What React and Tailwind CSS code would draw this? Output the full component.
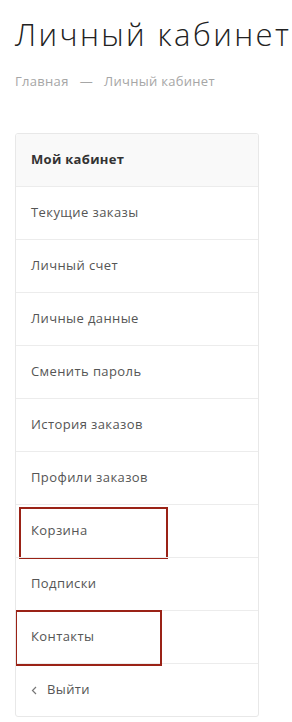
import React from 'react';

const items = [
  'Текущие заказы',
  'Личный счет',
  'Личные данные',
  'Сменить пароль',
  'История заказов',
  'Профили заказов',
  'Корзина',
  'Подписки',
  'Контакты',
];

export default function App() {
  return (
    <div className="min-h-screen bg-white px-[15px] pt-[16px] text-[#333]" style={{ fontFamily: '"Open Sans", "Liberation Sans", sans-serif' }}>
      <h1 className="whitespace-nowrap text-[31px] font-light leading-[36px] tracking-[2.4px] text-[#222]">Личный кабинет</h1>
      <div className="mt-[20px] flex items-center text-[13px] leading-[18px] tracking-[0.3px] text-[#a6a6a6]">
        <span>Главная</span>
        <span className="mx-[11px]">—</span>
        <span>Личный кабинет</span>
      </div>

      <div className="mt-[43px] w-[244px] overflow-hidden rounded-[3px] border border-[#e8e8e8]">
        <div className="flex h-[52px] items-center bg-[#f9f9f9] px-[15px] text-[13px] font-bold tracking-[0.3px] text-[#333]">Мой кабинет</div>
        {items.map((item) => (
          <div key={item} className="relative flex h-[53px] items-center border-t border-[#ececec] px-[15px] text-[13px] tracking-[0.4px] text-[#555]">
            {item}
            {item === 'Корзина' && (
              <span className="pointer-events-none absolute left-[3px] top-[2px] h-[52px] w-[149px] border-2 border-[#9a2216]" />
            )}
            {item === 'Контакты' && (
              <span className="pointer-events-none absolute -left-px -top-px h-[56px] w-[147px] border-2 border-[#9a2216]" />
            )}
          </div>
        ))}
        <div className="flex h-[53px] items-center gap-[10px] border-t border-[#ececec] px-[15px] text-[13px] tracking-[0.4px] text-[#555]">
          <svg width="6" height="9" viewBox="0 0 6 9" fill="none" stroke="#777" strokeWidth="1.2">
            <path d="M5 1L1.5 4.5L5 8" />
          </svg>
          <span>Выйти</span>
        </div>
      </div>
    </div>
  );
}
